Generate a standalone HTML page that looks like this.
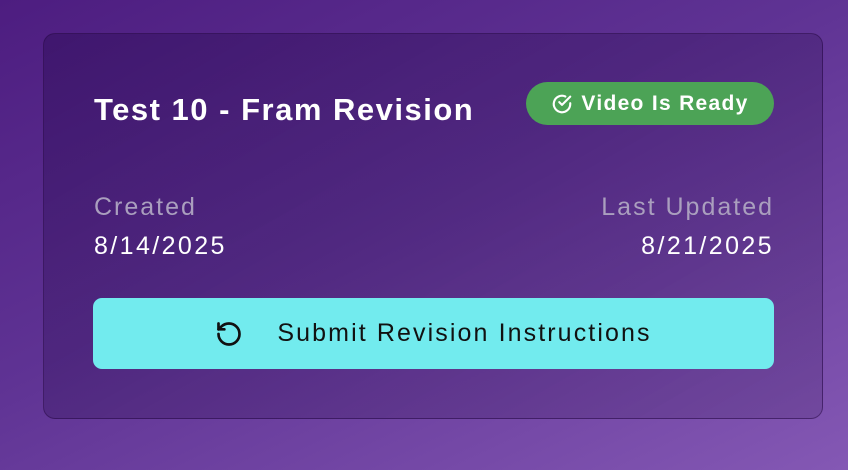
<!DOCTYPE html>
<html><head><style>
body{margin:0;width:848px;height:470px;overflow:hidden;background:linear-gradient(155deg,#4d1d80 0%,#5f3394 45%,#8458b4 100%);font-family:"Liberation Sans",sans-serif;position:relative}
.card{position:absolute;left:43px;top:33px;width:778px;height:384px;border:1px solid rgba(40,10,70,.5);border-radius:12px;background:linear-gradient(150deg,rgba(40,10,80,.4),rgba(60,30,90,.2));}
.title{position:absolute;left:50px;top:58px;font-size:31px;font-weight:bold;color:#fff;letter-spacing:1.5px}
.badge{position:absolute;left:482px;top:48px;width:248px;height:43px;border-radius:22px;background:#4ca356;color:#fff;font-size:21px;font-weight:bold;display:flex;align-items:center;justify-content:center;gap:8px;letter-spacing:1.3px}
.lbl{position:absolute;font-size:25px;color:#aa9fbe;letter-spacing:2px}
.val{position:absolute;font-size:25px;color:#fff;letter-spacing:2.4px}
.btn{position:absolute;left:49px;top:264px;width:681px;height:71px;border-radius:9px;background:#72ebee;display:flex;align-items:center;justify-content:center;gap:34px;font-size:25px;color:#111;letter-spacing:2.1px}
</style></head><body>
<div class="card">
<div class="title">Test 10 - Fram Revision</div>
<div class="badge"><svg width="22" height="22" viewBox="0 0 24 24" fill="none" stroke="#fff" stroke-width="2.3" stroke-linecap="round" stroke-linejoin="round"><path d="M21 11.1V12a9 9 0 1 1-5.3-8.2"/><path d="M21 4 12 13l-3-3"/></svg>Video Is Ready</div>
<div class="lbl" style="left:50px;top:159px">Created</div>
<div class="val" style="left:50px;top:198px">8/14/2025</div>
<div class="lbl" style="right:48px;top:159px">Last Updated</div>
<div class="val" style="right:48px;top:198px">8/21/2025</div>
<div class="btn"><svg width="28" height="28" viewBox="0 0 24 24" fill="none" stroke="#111" stroke-width="2.3" stroke-linecap="round" stroke-linejoin="round"><path d="M3 12a9 9 0 1 0 9-9 9.75 9.75 0 0 0-6.74 2.74L3 8"/><path d="M3 3v5h5"/></svg><span>Submit Revision Instructions</span></div>
</div>
</body></html>
